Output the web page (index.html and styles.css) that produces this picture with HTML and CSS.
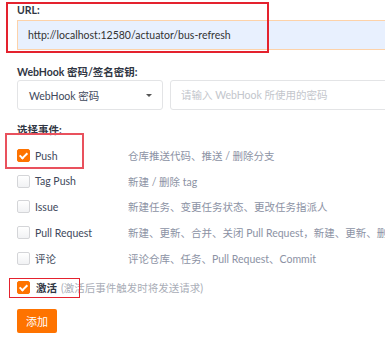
FILE: index.html
```html
<!DOCTYPE html>
<html lang="zh-CN">
<head>
    <meta charset="UTF-8">
    <meta name="viewport" content="width=device-width, initial-scale=1.0">
    <title>WebHook 设置</title>
    <link rel="stylesheet" href="styles.css">
</head>
<body>
    <div class="page">
        <div class="form">
            <div class="field field-url">
                <label class="field-label">URL:</label>
                <input class="text-input url-input" type="text" value="http://localhost:12580/actuator/bus-refresh">
            </div>

            <div class="field field-secret">
                <label class="field-label">WebHook 密码/签名密钥:</label>
                <div class="secret-row">
                    <div class="select">
                        <span>WebHook 密码</span>
                        <span class="caret"></span>
                    </div>
                    <input class="text-input secret-input" type="text" placeholder="请输入 WebHook 所使用的密码">
                </div>
            </div>

            <div class="field field-events">
                <label class="field-label">选择事件:</label>
                <div class="event">
                    <span class="check checked"></span>
                    <span class="event-name">Push</span>
                    <span class="event-desc">仓库推送代码、推送 / 删除分支</span>
                </div>
                <div class="event">
                    <span class="check"></span>
                    <span class="event-name">Tag Push</span>
                    <span class="event-desc">新建 / 删除 tag</span>
                </div>
                <div class="event">
                    <span class="check"></span>
                    <span class="event-name">Issue</span>
                    <span class="event-desc">新建任务、变更任务状态、更改任务指派人</span>
                </div>
                <div class="event">
                    <span class="check"></span>
                    <span class="event-name">Pull Request</span>
                    <span class="event-desc">新建、更新、合并、关闭 Pull Request，新建、更新、删</span>
                </div>
                <div class="event">
                    <span class="check"></span>
                    <span class="event-name">评论</span>
                    <span class="event-desc">评论仓库、任务、Pull Request、Commit</span>
                </div>
            </div>

            <div class="active-row">
                <span class="check checked"></span>
                <strong class="active-name">激活</strong>
                <span class="active-hint">(激活后事件触发时将发送请求)</span>
            </div>

            <button class="btn-add">添加</button>
        </div>

        <!-- marcações em vermelho por cima do formulário -->
        <div class="mark mark-url"></div>
        <div class="mark mark-push"></div>
        <div class="mark mark-active"></div>
    </div>
</body>
</html>
```

FILE: styles.css
```css
body {
    margin: 0;
    background: #fff;
    font-family: Lato, "Noto Sans CJK SC", sans-serif;
    font-size: 10.5px;
    color: #40485b;
    overflow: hidden;
}
.page {
    position: relative;
    width: 385px;
    height: 345px;
    overflow: hidden;
}
.form {
    width: 440px;
    padding: 2px 0 0 17px;
}
.field-label {
    display: block;
    height: 16px;
    line-height: 16px;
    font-weight: bold;
    font-size: 10.5px;
    color: #303643;
}
.text-input {
    box-sizing: border-box;
    height: 30px;
    padding: 0 10px;
    font-family: inherit;
    font-size: 10.5px;
    border: 1px solid #e3e4e6;
    border-radius: 3px;
    outline: none;
    color: #40485b;
}
.url-input {
    display: block;
    width: 420px;
    margin-top: 2px;
    background: #e8f0fe;
    border-color: #fdd2a9;
    border-radius: 0;
    color: #333;
}
.field-secret {
    margin-top: 14px;
}
.secret-row {
    display: flex;
    gap: 7px;
}
.select {
    box-sizing: border-box;
    width: 146px;
    height: 30px;
    padding: 0 10px 0 11px;
    display: flex;
    align-items: center;
    justify-content: space-between;
    border: 1px solid #e3e4e6;
    border-radius: 3px;
    color: #40485b;
}
.caret {
    width: 0;
    height: 0;
    border-left: 3px solid transparent;
    border-right: 3px solid transparent;
    border-top: 3px solid #555;
}
.secret-input {
    flex: 1;
}
.secret-input::placeholder {
    color: #c3c6cc;
}
.field-events {
    margin-top: 12px;
}
.field-events .field-label {
    margin-bottom: 5px;
}
.event {
    height: 25.6px;
    display: flex;
    align-items: center;
    white-space: nowrap;
}
.check {
    box-sizing: border-box;
    flex: none;
    width: 13px;
    height: 13px;
    border: 1px solid #d4d5d8;
    border-radius: 2px;
    background: linear-gradient(#fff, #f1f2f4);
    position: relative;
}
.check.checked {
    border-color: #fe7300;
    background: #fe7300;
}
.check.checked::after {
    content: "";
    position: absolute;
    left: 3px;
    top: 1px;
    width: 3px;
    height: 6px;
    border-right: 2px solid #fff;
    border-bottom: 2px solid #fff;
    transform: rotate(45deg);
}
.event-name {
    flex: none;
    width: 93px;
    margin-left: 5px;
    color: #40485b;
}
.event-desc {
    color: #8c92a4;
}
.active-row {
    margin-top: 7px;
    height: 20px;
    display: flex;
    align-items: center;
    white-space: nowrap;
}
.active-name {
    margin-left: 6px;
    color: #303643;
}
.active-hint {
    margin-left: 4px;
    color: #a9adb7;
}
.btn-add {
    display: block;
    margin-top: 11px;
    width: 40px;
    height: 24px;
    padding: 0;
    border: none;
    border-radius: 2px;
    background: #fe7300;
    color: #fff;
    font-family: inherit;
    font-size: 11px;
    cursor: pointer;
}
.mark {
    position: absolute;
    box-sizing: border-box;
    border: 2px solid #e4222e;
}
.mark-url {
    left: 6px;
    top: 2px;
    width: 263px;
    height: 51px;
}
.mark-push {
    left: 5px;
    top: 133px;
    width: 79px;
    height: 36px;
    border-color: #e9515d;
}
.mark-active {
    left: 9px;
    top: 278px;
    width: 71px;
    height: 20px;
    border-width: 1.5px;
}
```
